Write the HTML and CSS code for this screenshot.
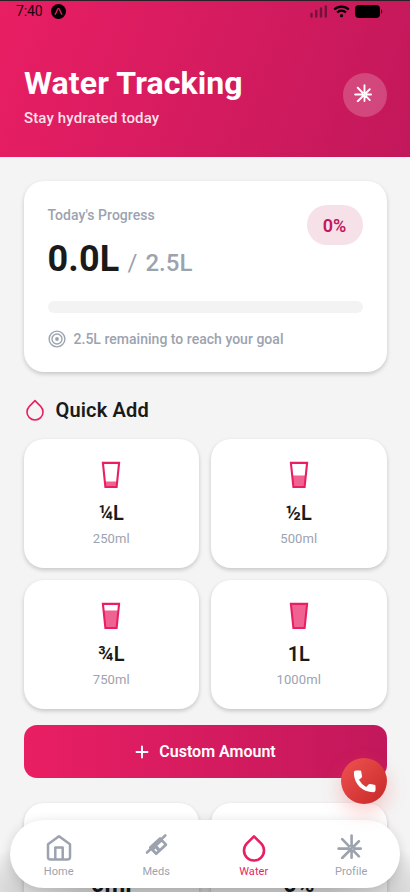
FILE: index.html
```
<!DOCTYPE html>
<html lang="en">
<head>
<meta charset="utf-8">
<meta name="viewport" content="width=device-width, initial-scale=1">
<title>Water Tracking</title>
<link rel="stylesheet" href="styles.css">
</head>
<body>
<svg class="defs" width="0" height="0" aria-hidden="true">
  <symbol id="burst" viewBox="0 0 24 24">
    <path d="M14 1.500v21.300M1.500 14h21.300M5 5l16 16.500M21 7 5 23" fill="none" stroke="currentColor" stroke-width="2.500" stroke-linecap="round"/>
    <circle cx="14" cy="14" r="3.600" fill="currentColor"/>
    <circle cx="12.600" cy="12.800" r=".7" class="burst-dot"/><circle cx="15.300" cy="14.500" r=".7" class="burst-dot"/>
  </symbol>
  <symbol id="drop" viewBox="0 0 24 24">
    <path d="M12 2.690l5.660 5.660a8 8 0 1 1-11.310 0z" fill="none" stroke="currentColor" stroke-linejoin="round"/>
  </symbol>
  <symbol id="glass" viewBox="0 0 20 28">
    <path d="M1.900 1.900h16.200L15.600 26H4.400Z" fill="none" stroke="currentColor" stroke-width="2.100"/>
  </symbol>
</svg>
<div class="screen">
  <header class="header">
    <div class="status">
      <span class="time">7:40</span>
      <svg class="app-dot" viewBox="0 0 15 15"><circle cx="7.500" cy="7.500" r="7.500"/><path d="M4.200 10.100C5.500 9 6.200 4.600 7.500 4.600S9.500 9 10.800 10.100" fill="none" stroke="#dd1c60" stroke-width="1.500" stroke-linecap="round"/></svg>
      <svg class="signal" viewBox="0 0 18 13"><path d="M1.500 9v2.500M6.200 6v5.500M11 3.500v8M15.800 1.500v10" fill="none" stroke="#73133b" stroke-width="2.400" stroke-linecap="round"/></svg>
      <svg class="wifi" viewBox="0 0 18 13"><g fill="none" stroke="#000" stroke-width="2.300"><path d="M1.300 4.400a11 11 0 0 1 15.400 0"/><path d="M4.300 7.500a6.700 6.700 0 0 1 9.400 0"/></g><circle cx="9" cy="10.900" r="1.700"/></svg>
      <svg class="battery" viewBox="0 0 28 13"><rect width="25" height="13" rx="4"/><path d="M26 4.200q1.200.5 1.200 2.300T26 8.800Z"/></svg>
    </div>
    <div class="headline">
      <div>
        <h1>Water Tracking</h1>
        <p class="tagline">Stay hydrated today</p>
      </div>
      <div class="round"><svg><use href="#burst"/></svg></div>
    </div>
  </header>

  <main class="content">
    <section class="progress card">
      <div class="progress-top">
        <div>
          <div class="label">Today's Progress</div>
          <div class="amount"><strong>0.0L</strong><span class="slash">/</span><span class="goal">2.5L</span></div>
        </div>
        <div class="badge">0%</div>
      </div>
      <div class="track"></div>
      <div class="remaining">
        <svg viewBox="0 0 18 18"><g fill="none" stroke="currentColor" stroke-width="1.400"><circle cx="9" cy="9" r="7.900"/><circle cx="9" cy="9" r="5"/></g><circle cx="9" cy="9" r="1.900"/></svg>
        <span>2.5L remaining to reach your goal</span>
      </div>
    </section>

    <h2><svg><use href="#drop"/></svg>Quick Add</h2>

    <div class="grid">
      <div class="card option">
        <svg viewBox="0 0 20 28"><path class="water" d="M3.800 20.500h12.400l-.6 5.500H4.400Z"/><use href="#glass"/></svg>
        <b>¼L</b><span>250ml</span>
      </div>
      <div class="card option">
        <svg viewBox="0 0 20 28"><path class="water" d="M3.200 14.500h13.600L15.600 26H4.400Z"/><use href="#glass"/></svg>
        <b>½L</b><span>500ml</span>
      </div>
      <div class="card option">
        <svg viewBox="0 0 20 28"><path class="water" d="M2.600 8.500h14.800L15.600 26H4.400Z"/><use href="#glass"/></svg>
        <b>¾L</b><span>750ml</span>
      </div>
      <div class="card option">
        <svg viewBox="0 0 20 28"><path class="water" d="M1.900 1.900h16.200L15.600 26H4.400Z"/><use href="#glass"/></svg>
        <b>1L</b><span>1000ml</span>
      </div>
    </div>

    <div class="custom">
      <svg viewBox="0 0 14 14"><path d="M7 1.500v11M1.500 7h11" stroke="#fff" stroke-width="1.900" stroke-linecap="round"/></svg>
      <span>Custom Amount</span>
    </div>

    <div class="grid stats">
      <div class="card stat">0ml</div>
      <div class="card stat">0%</div>
    </div>
  </main>

  <div class="shade"></div>
  <nav class="nav">
    <div class="tab">
      <svg class="home" viewBox="0 0 26 28"><g fill="none" stroke="currentColor" stroke-width="2.500" stroke-linejoin="round"><path d="M2 10.200 13 2.200l11 8V23a2.500 2.500 0 0 1-2.500 2.500h-17A2.500 2.500 0 0 1 2 23Z"/><path d="M9.300 25.500V13.600h7.400v11.900"/></g></svg>
      <span>Home</span>
    </div>
    <div class="tab">
      <svg class="meds" viewBox="0 0 24 24"><g transform="translate(14 12) rotate(-43)"><path d="M-12.500-2.700h25" stroke="currentColor" stroke-width="2.600" stroke-linecap="round"/><rect x="-8" y="-5.500" width="16" height="11.300" rx="1.300" fill="currentColor"/><path d="M-5.200.2h1.600v2.800h-1.600ZM-.3-.5h5.800v3.500H-.3Z" fill="#fff"/></g></svg>
      <span>Meds</span>
    </div>
    <div class="tab active">
      <svg class="water-tab"><use href="#drop"/></svg>
      <span>Water</span>
    </div>
    <div class="tab">
      <svg class="profile"><use href="#burst"/></svg>
      <span>Profile</span>
    </div>
  </nav>
  <div class="call"><svg viewBox="0 0 24 24"><path d="M3.800 1.500h3.700c.8 0 1.300.4 1.400 1.200l.7 4c.1.700-.1 1.200-.5 1.600L6.700 10.400a15.500 15.500 0 0 0 6.900 6.900l2.300-2.400c.4-.4.9-.6 1.500-.5l4 .7c.8.1 1.200.7 1.200 1.400v3.700c0 1.200-.8 2-2 2C9.800 22.200 1.800 14.200 1.800 3.500c0-1.200.8-2 2-2Z" fill="#fff"/></svg></div>
</div>
</body>
</html>
```
FILE: styles.css
```
* { box-sizing: border-box; }
body { margin: 0; font-family: Roboto, "Liberation Sans", sans-serif; background: #f4f4f4; color: #1a1a1a; }
.defs { position: absolute; }
.burst-dot { fill: #d0d3da; }
.round .burst-dot { fill: #cf4379; }
.screen { position: relative; height: 892px; overflow: hidden; }
svg { display: block; flex: none; }

.header { height: 157px; border-top: 1px solid #2c2027; background: linear-gradient(110deg, #e91e63, #c2185b); color: #fff; }
.status { display: flex; align-items: center; height: 21px; padding: 0 27px 0 16px; color: #21000e; }
.time { font-size: 14px; line-height: 21px; width: 35px; letter-spacing: -.1px; }
.app-dot { width: 15px; height: 15px; margin-right: auto; }
.signal { width: 18px; height: 13px; margin-right: 5px; }
.wifi { width: 17px; height: 13px; margin-right: 5px; }
.battery { width: 28px; height: 13px; }
.headline { display: flex; justify-content: space-between; align-items: center; padding: 42px 23.500px 0 24px; }
h1 { margin: 0; font-size: 32px; line-height: 39px; font-weight: 700; letter-spacing: .12px; }
.tagline { margin: 5px 0 0; font-size: 15px; line-height: 20px; font-weight: 500; letter-spacing: .14px; color: rgba(255,255,255,.88); }
.round { width: 44px; height: 44px; margin-top: -3px; border-radius: 50%; background: rgba(255,255,255,.2); display: grid; place-items: center; }
.round svg { width: 18px; height: 18px; margin: 0 3px 3px 0; }

.content { padding: 24px 23.500px 0; }
.card { background: #fff; border-radius: 20px; box-shadow: 0 2px 4px rgba(0,0,0,.19); }
.progress { height: 191px; padding: 24px; }
.progress-top { display: flex; justify-content: space-between; align-items: flex-start; height: 96px; }
.label { font-size: 14px; line-height: 20px; font-weight: 500; letter-spacing: .04px; color: #9ca3af; }
.amount { display: flex; align-items: baseline; margin-top: 13px; line-height: 42px; color: #9ca3af; }
.amount strong { font-size: 36px; letter-spacing: .2px; color: #1a1a1a; }
.slash { font-size: 24px; margin: 0 8px; }
.goal { font-size: 24px; font-weight: 500; }
.badge { width: 56px; height: 40px; border-radius: 20px; background: #f6e1e9; color: #c2185b; font-size: 18px; font-weight: 600; line-height: 41px; text-align: center; }
.track { height: 12px; border-radius: 6px; background: #f3f3f3; }
.remaining { display: flex; align-items: center; gap: 8px; margin-top: 16px; font-size: 14px; line-height: 20px; font-weight: 500; letter-spacing: .02px; color: #9ca3af; }
.remaining svg { width: 18px; height: 18px; margin-top: -1px; fill: currentColor; }

h2 { display: flex; align-items: center; gap: 9px; margin: 26px 0 0; height: 24px; font-size: 20px; line-height: 24px; font-weight: 600; letter-spacing: .15px; }
h2 svg { width: 24px; height: 24px; margin: 0 0 0 -1px; color: #e91e63; stroke-width: 1.600; }
.grid { display: grid; grid-template-columns: 1fr 1fr; gap: 12px; margin-top: 17px; }
.option { height: 129px; display: flex; flex-direction: column; align-items: center; padding-top: 22px; }
.option svg { width: 20px; height: 28px; color: #e91e63; }
.water { fill: #f06292; }
.option b { margin-top: 12px; font-size: 20px; line-height: 24px; font-weight: 600; }
.option span { margin-top: 5px; font-size: 13px; line-height: 18px; font-weight: 450; letter-spacing: .1px; color: #9ca3af; }
.custom { display: flex; align-items: center; justify-content: center; gap: 10px; height: 53px; padding-left: 1px; margin-top: 16px; border-radius: 13px; background: linear-gradient(90deg, #e91e63, #c2185b); color: #fff; font-size: 16px; font-weight: 600; }
.custom svg { width: 14px; height: 14px; }
.stats { margin-top: 25px; }
.stat { height: 120px; padding-top: 66px; text-align: center; font-size: 24px; line-height: 30px; font-weight: 700; }

.shade { position: absolute; left: 0; right: 0; bottom: 0; height: 72px; background: radial-gradient(ellipse 60% 100% at 50% 100%, rgba(0,0,0,.23) 50%, rgba(0,0,0,.15) 75%, rgba(0,0,0,0) 100%); }
.nav { position: absolute; left: 10px; right: 10px; top: 820px; height: 68px; border-radius: 34px; background: #fff; box-shadow: 0 2px 12px rgba(0,0,0,.14); display: flex; }
.tab { flex: 1; display: flex; flex-direction: column; align-items: center; color: #9ca3af; font-size: 11px; line-height: 14px; font-weight: 450; letter-spacing: .1px; }
.tab svg { width: 26px; height: 28px; margin: 14px 0 3px; }
.tab .meds { width: 24px; height: 24px; margin: 14px 0 7px; overflow: visible; }
.tab .profile { width: 25px; height: 25px; margin: 14px 4px 6px 0; }
.tab .water-tab { width: 30px; height: 30px; margin: 13px 0 2px; stroke-width: 2.100; }
.tab.active { color: #e91e63; }
.call { position: absolute; left: 341px; top: 758px; width: 46px; height: 46px; border-radius: 50%; background: linear-gradient(135deg, #ef5350, #c62828); box-shadow: 0 8px 20px rgba(239,83,80,.3); display: grid; place-items: center; }
.call svg { width: 25px; height: 25px; }
```
